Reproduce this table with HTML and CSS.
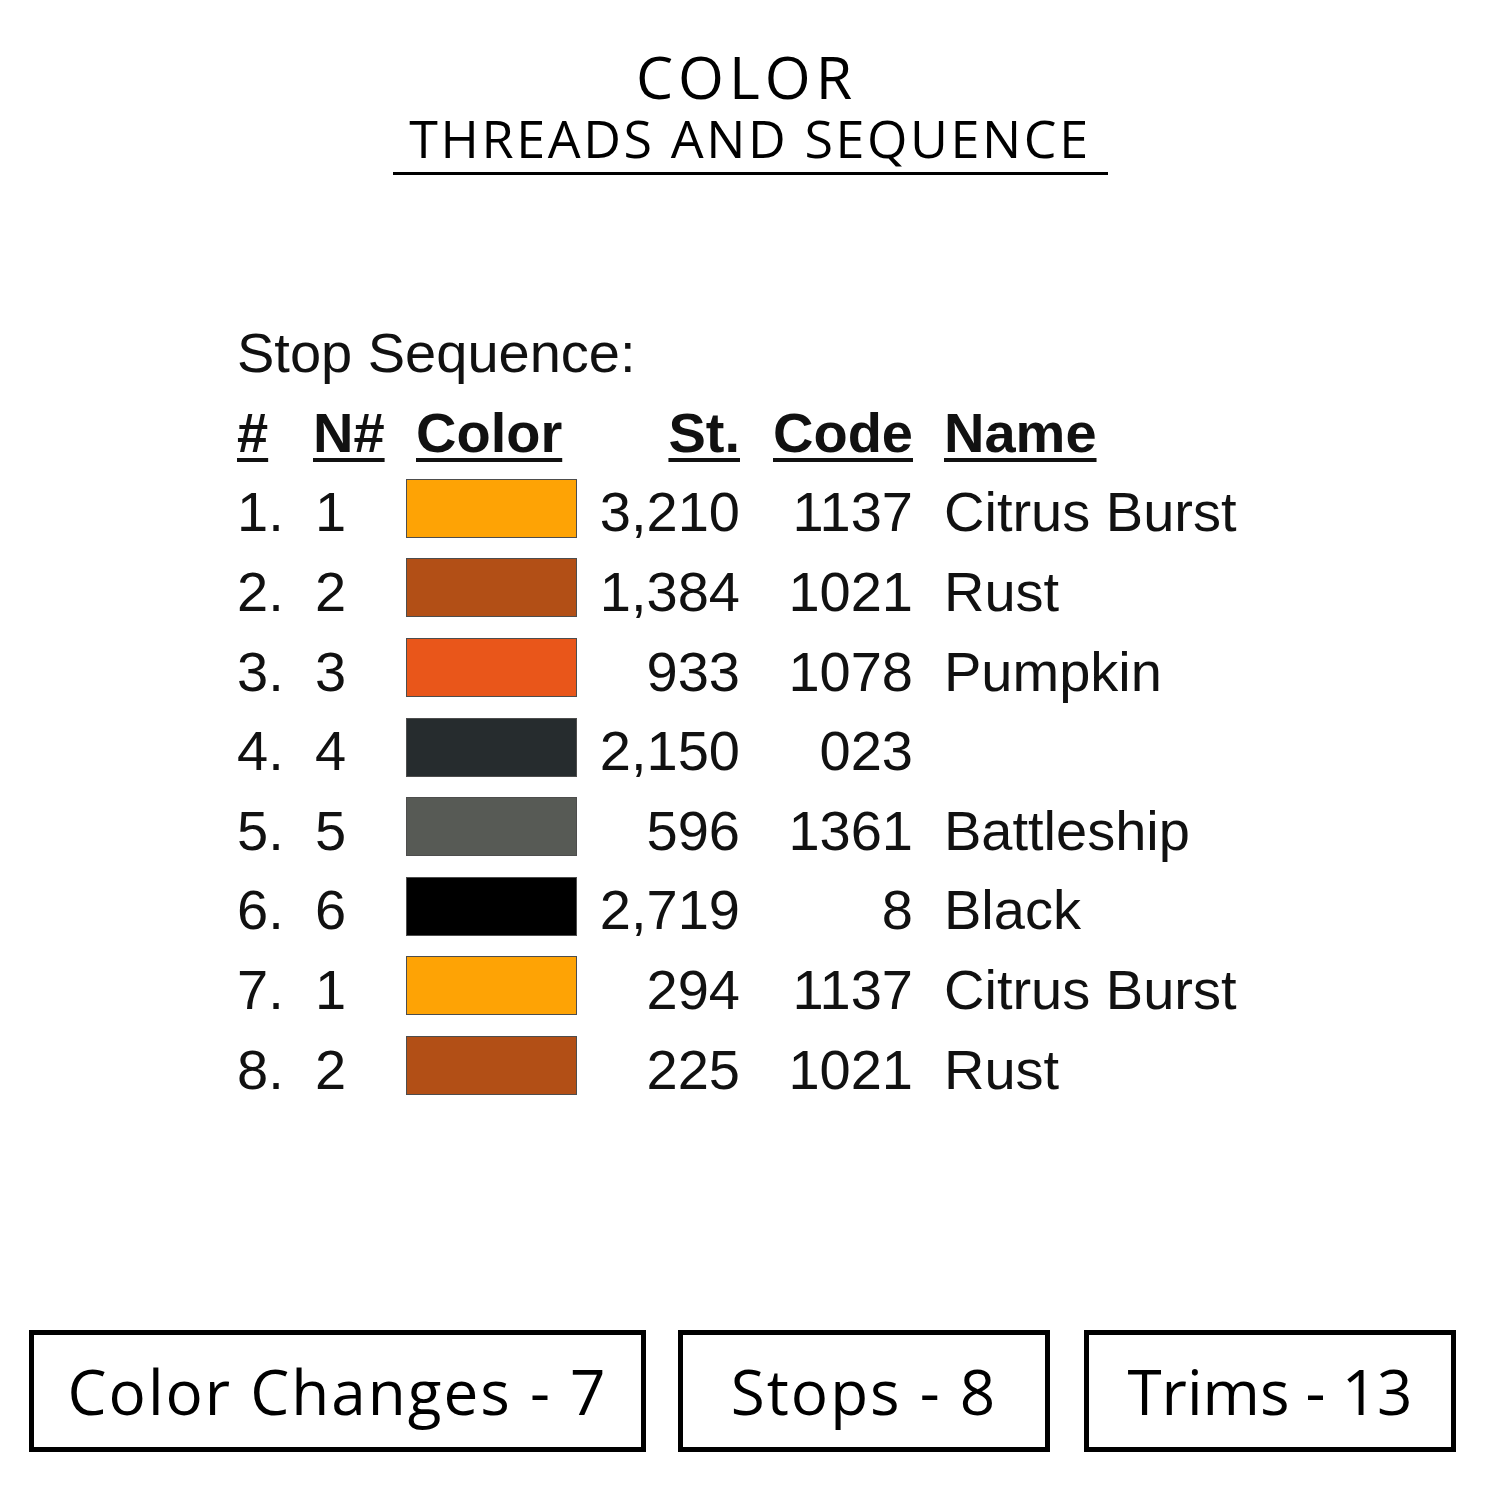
FILE: index.html
```html
<!DOCTYPE html>
<html>
<head>
<meta charset="utf-8">
<link rel="stylesheet" href="styles.css">
</head>
<body>
<div class="page">
  <header class="head">
    <div class="title">COLOR</div>
    <div class="subtitle">THREADS AND SEQUENCE</div>
    <div class="rule"></div>
  </header>

  <section class="seq">
    <div class="seq-title">Stop Sequence:</div>
    <div class="grid">
      <div class="h c1">#</div>
      <div class="h c2">N#</div>
      <div class="h c3">Color</div>
      <div class="h c4">St.</div>
      <div class="h c5">Code</div>
      <div class="h c6">Name</div>

      <div class="c1">1.</div><div class="c2">1</div><div class="c3"><span class="sw sw-citrus"></span></div><div class="c4">3,210</div><div class="c5">1137</div><div class="c6">Citrus Burst</div>
      <div class="c1">2.</div><div class="c2">2</div><div class="c3"><span class="sw sw-rust"></span></div><div class="c4">1,384</div><div class="c5">1021</div><div class="c6">Rust</div>
      <div class="c1">3.</div><div class="c2">3</div><div class="c3"><span class="sw sw-pumpkin"></span></div><div class="c4">933</div><div class="c5">1078</div><div class="c6">Pumpkin</div>
      <div class="c1">4.</div><div class="c2">4</div><div class="c3"><span class="sw sw-dark"></span></div><div class="c4">2,150</div><div class="c5">023</div><div class="c6"></div>
      <div class="c1">5.</div><div class="c2">5</div><div class="c3"><span class="sw sw-battle"></span></div><div class="c4">596</div><div class="c5">1361</div><div class="c6">Battleship</div>
      <div class="c1">6.</div><div class="c2">6</div><div class="c3"><span class="sw sw-black"></span></div><div class="c4">2,719</div><div class="c5">8</div><div class="c6">Black</div>
      <div class="c1">7.</div><div class="c2">1</div><div class="c3"><span class="sw sw-citrus"></span></div><div class="c4">294</div><div class="c5">1137</div><div class="c6">Citrus Burst</div>
      <div class="c1">8.</div><div class="c2">2</div><div class="c3"><span class="sw sw-rust"></span></div><div class="c4">225</div><div class="c5">1021</div><div class="c6">Rust</div>
    </div>
  </section>

  <footer class="stats">
    <div class="stat stat-wide">Color Changes - 7</div>
    <div class="stat">Stops - 8</div>
    <div class="stat stat-last">Trims - 13</div>
  </footer>
</div>
</body>
</html>
```

FILE: styles.css
```css
html, body {
  margin: 0;
  padding: 0;
  background: #ffffff;
}

.page {
  width: 1500px;
  height: 1500px;
  display: flex;
  flex-direction: column;
  color: #000;
}

.head {
  display: flex;
  flex-direction: column;
  align-items: center;
  padding-top: 45px;
  font-family: "Open Sans", sans-serif;
}

.title {
  font-size: 59px;
  line-height: 62px;
  letter-spacing: 5px;
  padding-right: 7px;
  font-weight: 500;
}

.subtitle {
  margin-top: 2px;
  font-size: 52px;
  line-height: 58px;
  letter-spacing: 2.6px;
  font-weight: 400;
}

.rule {
  width: 715px;
  height: 3px;
  background: #000;
  margin-top: 5px;
}

.seq {
  margin-top: 150px;
  padding-left: 237px;
  font-family: "Liberation Sans", Arial, sans-serif;
  font-size: 56px;
  color: #111;
}

.seq-title {
  line-height: 56px;
}

.grid {
  display: grid;
  grid-template-columns: 76px 93px 171px 163px 173px auto;
  grid-auto-rows: 79.6px;
  align-items: center;
  margin-top: 12px;
}

.grid > div {
  line-height: 56px;
  white-space: nowrap;
}

.h {
  font-weight: bold;
  text-decoration: underline;
  text-decoration-thickness: 4px;
  text-underline-offset: 6px;
}

.c2 { padding-left: 2px; }
.h.c2 { padding-left: 0; }
.h.c3 { padding-left: 10px; }
.c4, .c5 { text-align: right; }
.c6 { padding-left: 31px; }

.sw {
  display: block;
  width: 169px;
  height: 57px;
  margin-top: -8px;
  border: 1px solid #4d4d4d;
}

.sw-citrus { background: #fea305; }
.sw-rust { background: #b24f16; }
.sw-pumpkin { background: #e9561a; }
.sw-dark { background: #262c2e; }
.sw-battle { background: #575a55; }
.sw-black { background: #000000; }

.stats {
  margin-top: auto;
  margin-bottom: 48px;
  padding-left: 29px;
  display: flex;
  gap: 32px;
  font-family: "Open Sans", sans-serif;
}

.stat {
  width: 362px;
  height: 112px;
  border: 5px solid #000;
  display: flex;
  align-items: center;
  justify-content: center;
  font-size: 62px;
  letter-spacing: 2px;
}

.stat-wide {
  width: 607px;
}

.stat-last {
  margin-left: 2px;
  letter-spacing: 0;
}
```
